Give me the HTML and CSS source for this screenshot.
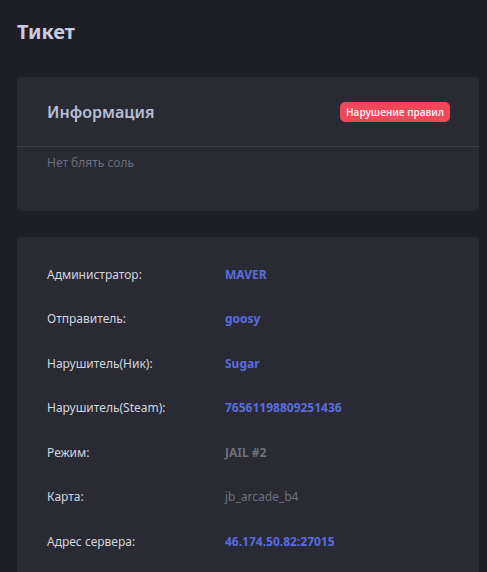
FILE: index.html
```html
<!DOCTYPE html>
<html lang="ru">
<head>
<meta charset="utf-8">
<link rel="stylesheet" href="styles.css">
</head>
<body>
<div class="page">
  <h1 class="title">Тикет</h1>
  <section class="card info">
    <div class="card-head">
      <h2 class="card-title">Информация</h2>
      <span class="badge">Нарушение правил</span>
    </div>
    <div class="card-body">
      <p class="desc">Нет блять соль</p>
    </div>
  </section>
  <section class="card details">
    <div class="row"><span class="label">Администратор:</span><span class="value blue">MAVER</span></div>
    <div class="row"><span class="label">Отправитель:</span><span class="value blue">goosy</span></div>
    <div class="row"><span class="label">Нарушитель(Ник):</span><span class="value blue">Sugar</span></div>
    <div class="row"><span class="label">Нарушитель(Steam):</span><span class="value blue">76561198809251436</span></div>
    <div class="row"><span class="label">Режим:</span><span class="value grey">JAIL #2</span></div>
    <div class="row"><span class="label">Карта:</span><span class="value grey light">jb_arcade_b4</span></div>
    <div class="row"><span class="label">Адрес сервера:</span><span class="value blue">46.174.50.82:27015</span></div>
  </section>
</div>
</body>
</html>
```
FILE: styles.css
```css
html, body {
  margin: 0;
  padding: 0;
  background: #1d1e26;
  font-family: "Noto Sans", "Open Sans", sans-serif;
  overflow: hidden;
}
.page {
  padding: 0 8px 0 17px;
  height: 572px;
}
.title {
  margin: 0;
  padding-top: 17px;
  height: 77px;
  box-sizing: border-box;
  font-size: 20px;
  line-height: 30px;
  font-weight: 700;
  color: #c9cce0;
}
.card {
  background: #292a33;
  border-radius: 5px;
}
.info {
  margin-bottom: 26px;
}
.card-head {
  height: 69px;
  display: flex;
  align-items: center;
  justify-content: space-between;
  padding: 0 29px 0 30px;
  border-bottom: 1px solid #3d3e49;
}
.card-title {
  margin: 0;
  font-size: 16px;
  font-weight: 600;
  color: #b8bcd5;
}
.badge {
  background: #ef4859;
  color: #f6e8ec;
  font-size: 10px;
  font-weight: 600;
  line-height: 20px;
  height: 20px;
  padding: 0 6px;
  border-radius: 5px;
}
.card-body {
  padding: 8px 30px 40px;
}
.desc {
  margin: 0;
  font-size: 12px;
  line-height: 16px;
  color: #6d6f7b;
}
.details {
  padding: 15px 30px 20px;
}
.row {
  display: flex;
  align-items: center;
  height: 44.5px;
}
.label {
  width: 178px;
  font-size: 12px;
  color: #d4d6df;
}
.value {
  font-size: 12px;
  font-weight: 700;
}
.blue { color: #5a6de0; }
.grey { color: #6d707c; }
.light { font-weight: 400; }
```
